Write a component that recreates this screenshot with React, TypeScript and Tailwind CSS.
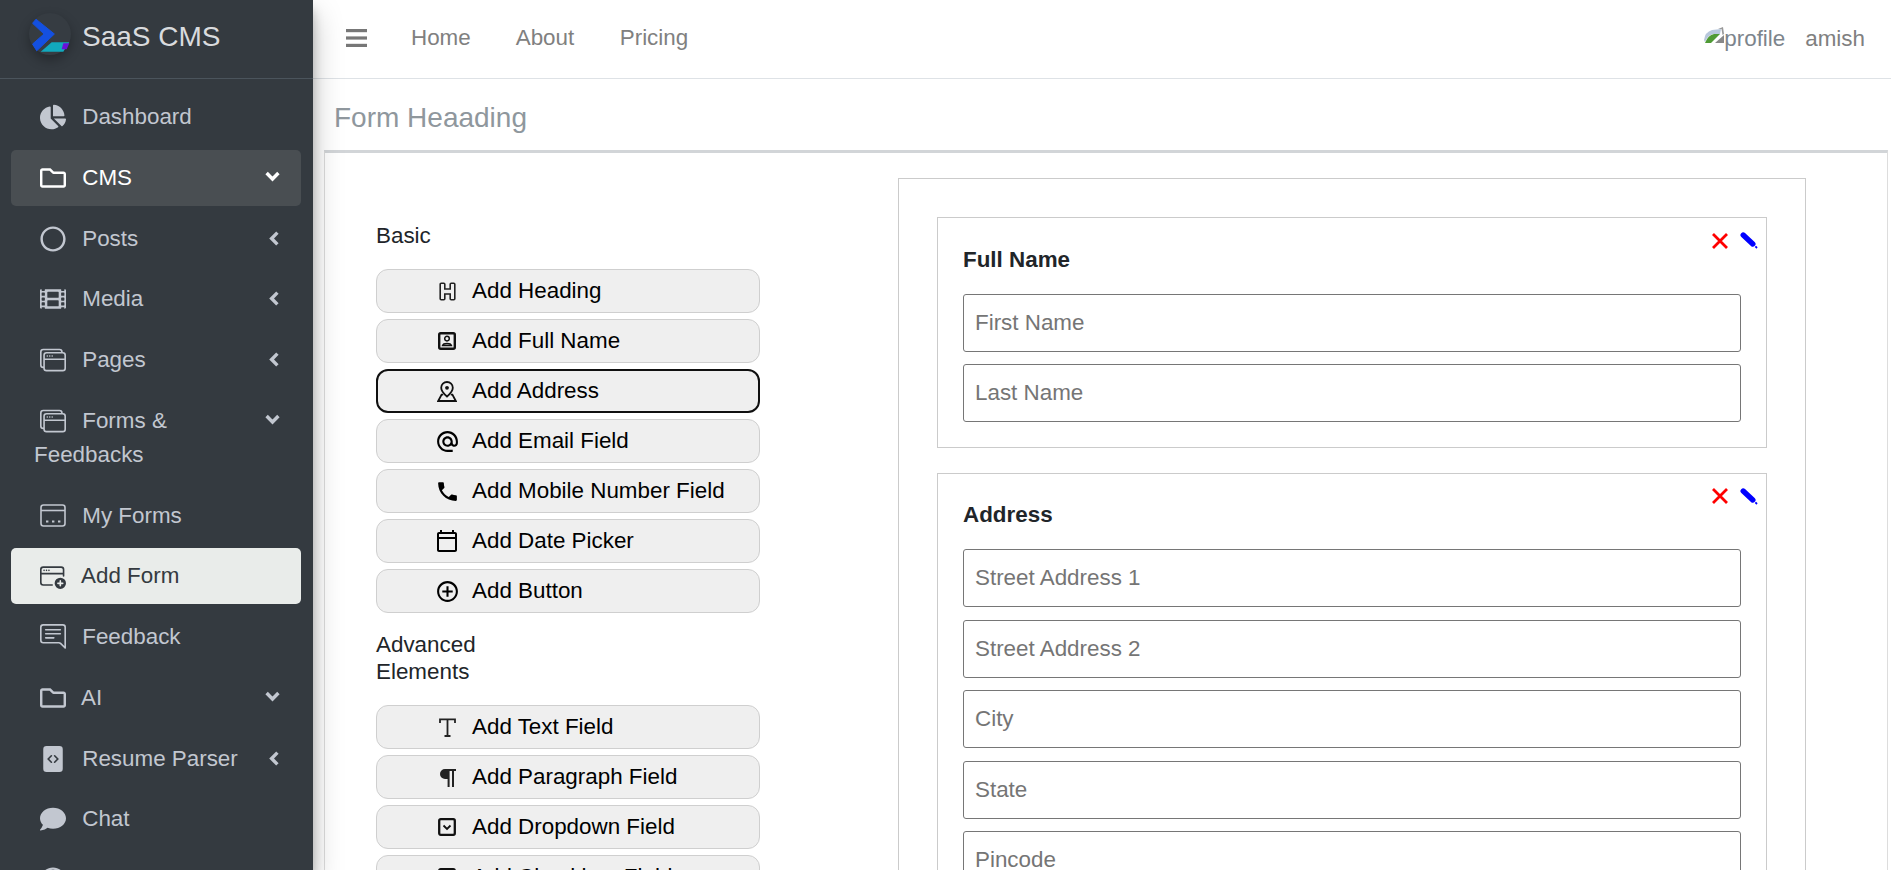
import { ReactNode } from "react";
import { FaChartPie, FaComment, FaFilm, FaRegCircle, FaRegFolder } from "react-icons/fa";
import { BsChatRightText, BsFileCodeFill, BsWindowPlus, BsWindowStack } from "react-icons/bs";
import { MdAlternateEmail, MdOutlineAddCircleOutline, MdOutlineCalendarToday, MdPhone } from "react-icons/md";

type NavItem = {
  label: ReactNode;
  icon: ReactNode;
  arrow?: "left" | "down";
  state?: "open" | "current";
};

function WindowDots({ className }: { className?: string }) {
  return (
    <svg viewBox="0 0 26 24" className={className} fill="none" stroke="currentColor" strokeWidth="1.6">
      <rect x="1" y="1" width="24" height="21" rx="2.5" />
      <path d="M1 6.5h24" />
      <path d="M6 17.5h2.4M12 17.5h2.4M18 17.5h2.4" strokeWidth="2.2" />
    </svg>
  );
}

function OutlineH() {
  return (
    <svg viewBox="0 0 17 19" className="w-[17px] h-[19px]" fill="none" stroke="#222" strokeWidth="1.6">
      <path d="M1.2 2.2a1 1 0 0 1 1-1h2.6a1 1 0 0 1 1 1V7h5.4V2.2a1 1 0 0 1 1-1h2.6a1 1 0 0 1 1 1v14.6a1 1 0 0 1-1 1h-2.6a1 1 0 0 1-1-1V12H5.8v4.8a1 1 0 0 1-1 1H2.2a1 1 0 0 1-1-1z" />
    </svg>
  );
}

function PersonBox() {
  return (
    <svg viewBox="0 0 18 18" className="w-[18px] h-[18px]" fill="none" stroke="#111">
      <rect x="1.2" y="1.2" width="15.6" height="15.6" rx="1.5" strokeWidth="2.4" />
      <circle cx="9" cy="6.6" r="2.3" strokeWidth="1.5" />
      <path d="M4.6 13.4c.8-2.6 8-2.6 8.8 0z" strokeWidth="1.5" />
    </svg>
  );
}

function PinBase() {
  return (
    <svg viewBox="0 0 20 21" className="w-[20px] h-[21px]" fill="none" stroke="#111" strokeWidth="1.8">
      <path d="M10 1a5.8 5.8 0 0 0-5.8 5.8c0 3.8 5.8 8.7 5.8 8.7s5.8-4.9 5.8-8.7A5.8 5.8 0 0 0 10 1z" />
      <circle cx="10" cy="6.8" r="1.9" fill="#111" stroke="none" />
      <path d="M6.2 13.6H4.6L1.2 20h17.6l-3.4-6.4h-1.6" />
    </svg>
  );
}

function SerifT() {
  return (
    <svg viewBox="0 0 17 19" className="w-[17px] h-[19px]" fill="none" stroke="#222" strokeWidth="1.8">
      <path d="M1 5V1.4h15V5M8.5 1.4V18M5.5 18h6" />
    </svg>
  );
}

function ParagraphMark() {
  return (
    <svg viewBox="0 0 17 19" className="w-[17px] h-[19px]" fill="#222">
      <path d="M1 6a5 5 0 0 1 5-5h11v2h-2v16h-2V3h-2.4v16h-2v-8H6a5 5 0 0 1-5-5z" />
    </svg>
  );
}

function DropdownBox() {
  return (
    <svg viewBox="0 0 18 18" className="w-[18px] h-[18px]" fill="none" stroke="#111">
      <rect x="1.2" y="1.2" width="15.6" height="15.6" rx="1.5" strokeWidth="2.3" />
      <path d="M5.5 7.5 9 11l3.5-3.5" strokeWidth="1.8" />
    </svg>
  );
}

function CheckboxBox() {
  return (
    <svg viewBox="0 0 18 18" className="w-[18px] h-[18px]" fill="none" stroke="#111">
      <rect x="1.2" y="1.2" width="15.6" height="15.6" rx="1.5" strokeWidth="2.3" />
      <path d="m4.8 9 3 3 5.4-5.6" strokeWidth="1.8" />
    </svg>
  );
}

function Logo() {
  return (
    <div className="w-[42px] h-[42px] -mt-[6px] rounded-full bg-[#363c42] shadow-[0_5px_12px_rgba(0,0,0,0.3)] shrink-0">
      <svg viewBox="0 0 42 42" className="w-[42px] h-[42px]">
        <path
          d="M3.6 10.3 7 6.2 25.4 21 7.7 37.8 3.6 31l11.4-10z"
          fill="#1450e0"
          stroke="#1450e0"
          strokeWidth="1"
          strokeLinejoin="round"
        />
        <path d="M11.7 38.7 22.7 29.3h17.6l-6 9.4z" fill="#12a9bd" />
        <path d="M34.3 30.3h6l-2.6 6h-5z" fill="#6a10d8" />
      </svg>
    </div>
  );
}

const iconCls = "w-[26px] h-[26px]";

const navItems: NavItem[] = [
  { label: "Dashboard", icon: <FaChartPie className={iconCls} /> },
  { label: "CMS", icon: <FaRegFolder className={iconCls} />, arrow: "down", state: "open" },
  { label: "Posts", icon: <FaRegCircle className={iconCls} />, arrow: "left" },
  { label: "Media", icon: <FaFilm className={iconCls} />, arrow: "left" },
  { label: "Pages", icon: <BsWindowStack className={iconCls} />, arrow: "left" },
  {
    label: (
      <>
        Forms &amp;
        <br />
        Feedbacks
      </>
    ),
    icon: <BsWindowStack className={iconCls} />,
    arrow: "down",
  },
  { label: "My Forms", icon: <WindowDots className={iconCls} /> },
  { label: "Add Form", icon: <BsWindowPlus className={iconCls} />, state: "current" },
  { label: "Feedback", icon: <BsChatRightText className={iconCls} /> },
  { label: "AI", icon: <FaRegFolder className={iconCls} />, arrow: "down" },
  { label: "Resume Parser", icon: <BsFileCodeFill className={iconCls} />, arrow: "left" },
  { label: "Chat", icon: <FaComment className={iconCls} /> },
  { label: "", icon: <FaRegCircle className={iconCls} /> },
];

const basicFields = [
  { label: "Add Heading", icon: <OutlineH /> },
  { label: "Add Full Name", icon: <PersonBox /> },
  { label: "Add Address", icon: <PinBase />, focused: true },
  { label: "Add Email Field", icon: <MdAlternateEmail className="w-[25px] h-[25px]" /> },
  { label: "Add Mobile Number Field", icon: <MdPhone className="w-[25px] h-[25px]" /> },
  { label: "Add Date Picker", icon: <MdOutlineCalendarToday className="w-[24px] h-[24px]" /> },
  { label: "Add Button", icon: <MdOutlineAddCircleOutline className="w-[25px] h-[25px]" /> },
];

const advancedFields = [
  { label: "Add Text Field", icon: <SerifT /> },
  { label: "Add Paragraph Field", icon: <ParagraphMark /> },
  { label: "Add Dropdown Field", icon: <DropdownBox /> },
  { label: "Add Checkbox Field", icon: <CheckboxBox /> },
];

function SideLink({ item }: { item: NavItem }) {
  const tone =
    item.state === "current"
      ? "bg-[#e9ecea] text-[#343a40]"
      : item.state === "open"
        ? "bg-[#494e52] text-white"
        : "text-[#c2c7d0]";
  return (
    <a className={`relative block rounded-[5px] pl-[23px] pr-4 py-[11px] mb-[4.75px] leading-[34px] ${tone}`}>
      <span className="inline-block w-[36px] ml-px mr-[5px] align-top h-[34px]">
        <span className="flex h-full items-center justify-center">{item.icon}</span>
      </span>{" "}
      <span>{item.label}</span>
      {item.arrow === "left" && (
        <svg viewBox="0 0 10 15" className="absolute right-[22px] top-[20px] w-[10px] h-[15px]" fill="none" stroke="currentColor" strokeWidth="3.4">
          <path d="M8.4 1.6 2.6 7.5l5.8 5.9" />
        </svg>
      )}
      {item.arrow === "down" && (
        <svg viewBox="0 0 15 11" className="absolute right-[21px] top-[21px] w-[15px] h-[11px]" fill="none" stroke="currentColor" strokeWidth="3.4">
          <path d="M1.6 2 7.5 8l5.9-6" />
        </svg>
      )}
    </a>
  );
}

function FieldButton({ label, icon, focused }: { label: string; icon: ReactNode; focused?: boolean }) {
  return (
    <button
      className={`flex items-center w-[384px] h-[44px] shrink-0 rounded-[12px] bg-[#efefef] text-black ${
        focused ? "border-2 border-[#101010] pl-[56px]" : "border border-[#cfcfcf] pl-[57px]"
      }`}
    >
      <span className="flex w-[26px] justify-center shrink-0">{icon}</span>
      <span className="ml-[12px] pb-px">{label}</span>
    </button>
  );
}

function FormBlock({ title, fields }: { title: string; fields: string[] }) {
  return (
    <section className="relative border border-[#cbcbcb] px-[25px] pt-[24.5px] pb-[25px] mb-[25px]">
      <div className="absolute right-[8px] top-[14px] flex items-center gap-[12px]">
        <svg viewBox="0 0 16 16" className="w-[16px] h-[16px]" stroke="#ff0000" strokeWidth="2.8" fill="none">
          <path d="M1 1l14 14M15 1 1 15" />
        </svg>
        <svg viewBox="0 0 18 17" className="w-[18px] h-[17px]" fill="none" stroke="#0000ff">
          <path d="M3.2 3 12.8 12" strokeWidth="5.4" strokeLinecap="round" />
          <path d="M15.4 14.4 17 16" strokeWidth="1.8" />
        </svg>
      </div>
      <h3 className="font-bold text-[#212529] leading-[34px] mb-[17px]">{title}</h3>
      <div className="flex flex-col gap-[12.4px]">
        {fields.map((f) => (
          <input
            key={f}
            placeholder={f}
            className="w-full h-[58px] border border-[#767676] rounded-[3px] px-[11px] bg-white placeholder:text-[#757575] outline-none"
          />
        ))}
      </div>
    </section>
  );
}

export default function App() {
  return (
    <div className="flex h-[870px] w-[1891px] overflow-hidden bg-white text-[22.4px] font-['Liberation_Sans',Arial,sans-serif]">
      <aside className="relative z-10 w-[313px] shrink-0 bg-[#343a40] shadow-[0_14px_28px_rgba(0,0,0,0.25),0_10px_10px_rgba(0,0,0,0.22)]">
        <div className="flex items-center h-[79px] pl-[29px] pb-[4px] border-b border-[#4b545c] text-[#d9dbde]">
          <Logo />
          <span className="ml-[11px] text-[28px]">SaaS CMS</span>
        </div>
        <nav className="pt-[10px] px-[11px] w-[312px]">
          {navItems.map((item, i) => (
            <SideLink key={i} item={item} />
          ))}
        </nav>
      </aside>

      <main className="flex-1 min-w-0">
        <header className="flex items-center justify-between h-[79px] border-b border-[#dee2e6] text-[#808080]">
          <div className="flex items-center pb-[2px]">
            <svg viewBox="0 0 21 18" className="w-[21px] h-[18px] ml-[33px] mr-[44px]" fill="#777777">
              <rect x="0" y="0" width="21" height="3.2" />
              <rect x="0" y="7.4" width="21" height="3.2" />
              <rect x="0" y="14.8" width="21" height="3.2" />
            </svg>
            <a>Home</a>
            <a className="ml-[45px]">About</a>
            <a className="ml-[45.5px]">Pricing</a>
          </div>
          <div className="flex items-center pr-[26px]">
            <svg viewBox="0 0 20 16" className="w-[20px] h-[16px] -mt-[8px]">
              <path d="M0 13Q1 5 8 3l9-1-1 5H9Q4 8 1 15z" fill="#b7c7dc" />
              <path d="M1 16Q4 8 10 7h6l-9 9z" fill="#4f9a35" />
              <path d="M11 16l9-8v8z" fill="#888888" />
              <path d="M14 2l5-2 1 7-1.5 1-1-6z" fill="#999999" />
            </svg>
            <span className="text-[#7d858c]">profile</span>
            <span className="ml-[20px]">amish</span>
          </div>
        </header>

        <div className="pt-[22px] pl-[21px] h-[71px] text-[28px] leading-[34px] text-[#8f979d]">Form Heaading</div>

        <div className="ml-[11px] mr-[3px] border border-[#dddddd] border-t-[3px] border-t-[#d2d5d8] flex items-start">
          <div className="w-[573px] shrink-0 pl-[51px] pt-[69px]">
            <p className="text-[#212529] leading-[27px] mb-[20px]">Basic</p>
            <div className="flex flex-col gap-[6px]">
              {basicFields.map((f) => (
                <FieldButton key={f.label} {...f} />
              ))}
            </div>
            <p className="text-[#212529] leading-[27px] mt-[18px] mb-[20px] w-[120px]">Advanced Elements</p>
            <div className="flex flex-col gap-[6px]">
              {advancedFields.map((f) => (
                <FieldButton key={f.label} {...f} />
              ))}
            </div>
          </div>
          <div className="w-[908px] shrink-0 mt-[25px] border border-[#cbcbcb] px-[38px] pt-[38px]">
            <FormBlock title="Full Name" fields={["First Name", "Last Name"]} />
            <FormBlock
              title="Address"
              fields={["Street Address 1", "Street Address 2", "City", "State", "Pincode"]}
            />
          </div>
        </div>
      </main>
    </div>
  );
}
